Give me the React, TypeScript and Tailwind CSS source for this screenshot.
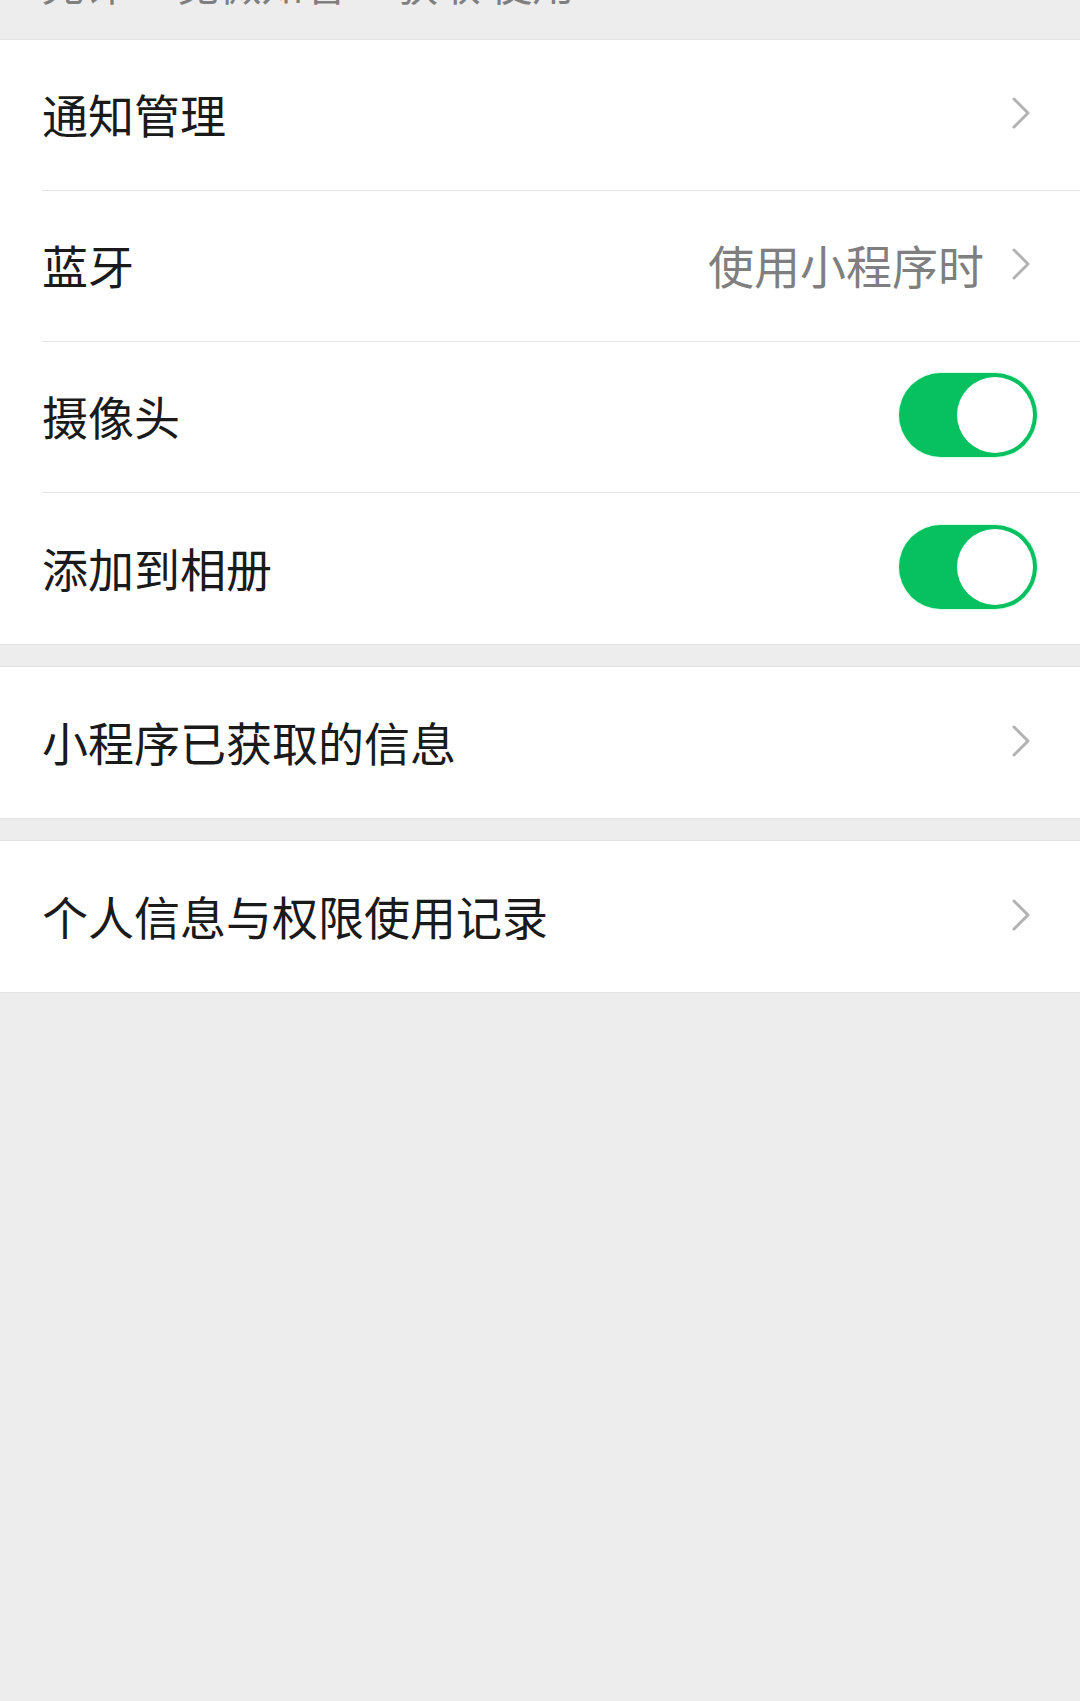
import React from "react";

const font = { fontFamily: '"Noto Sans CJK SC", "Noto Sans", sans-serif' };

function Chevron() {
  return (
    <svg width="18" height="32" viewBox="0 0 18 32" className="shrink-0">
      <polyline points="2,2 16,16 2,30" fill="none" stroke="#b2b2b2" strokeWidth="3" strokeLinecap="round" strokeLinejoin="round" />
    </svg>
  );
}

function Toggle() {
  return (
    <div className="flex h-[84px] w-[138px] items-center justify-end rounded-full bg-[#07c160] p-[4px] shadow-[0_0_2px_#7ef0b0]">
      <div className="h-[76px] w-[76px] rounded-full bg-white" />
    </div>
  );
}

function Row({ label, value, right, last }: { label: string; value?: string; right: "chevron" | "toggle"; last?: boolean }) {
  return (
    <div className="pl-[42px]">
      <div className={`flex h-[151px] items-center justify-between pb-[4px] ${right === "chevron" ? "pr-[50px]" : "pr-[43px]"} ${last ? "" : "border-b border-[#e6e6e6]"}`}>
        <span className="text-[46px] leading-none text-[#1a1a1a]">{label}</span>
        <div className="flex items-center gap-[28px]">
          {value && <span className="text-[46px] leading-none text-[#7f7f7f]">{value}</span>}
          {right === "chevron" ? <Chevron /> : <Toggle />}
        </div>
      </div>
    </div>
  );
}

export default function App() {
  return (
    <div className="min-h-[1701px] w-[1080px] bg-[#ededed]" style={font}>
      <div className="h-[39px] overflow-hidden pl-[42px]">
        <div className="-mt-[38px] whitespace-nowrap text-[42px] leading-none text-[#7f7f7f]">允许 “见微知著” 获取 使用</div>
      </div>
      <div className="border-y border-[#e3e3e3] bg-white">
        <Row label="通知管理" right="chevron" />
        <Row label="蓝牙" value="使用小程序时" right="chevron" />
        <Row label="摄像头" right="toggle" />
        <Row label="添加到相册" right="toggle" last />
      </div>
      <div className="mt-[21px] border-y border-[#e3e3e3] bg-white">
        <Row label="小程序已获取的信息" right="chevron" last />
      </div>
      <div className="mt-[21px] border-y border-[#e3e3e3] bg-white">
        <Row label="个人信息与权限使用记录" right="chevron" last />
      </div>
    </div>
  );
}
